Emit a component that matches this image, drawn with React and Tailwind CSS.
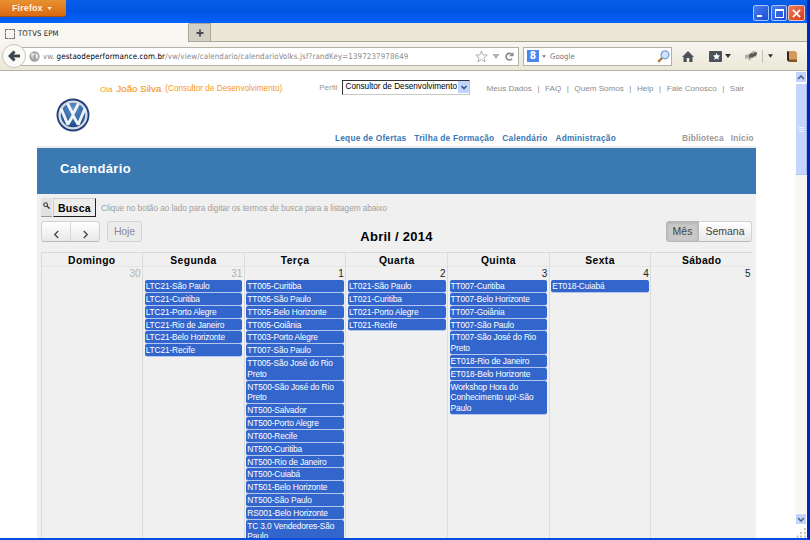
import React from 'react';

const week = [
  { name: 'Domingo', day: '30', muted: true, events: [] },
  {
    name: 'Segunda', day: '31', muted: true,
    events: ['LTC21-São Paulo', 'LTC21-Curitiba', 'LTC21-Porto Alegre', 'LTC21-Rio de Janeiro', 'LTC21-Belo Horizonte', 'LTC21-Recife'],
  },
  {
    name: 'Terça', day: '1',
    events: [
      'TT005-Curitiba', 'TT005-São Paulo', 'TT005-Belo Horizonte', 'TT005-Goiânia', 'TT003-Porto Alegre', 'TT007-São Paulo',
      'TT005-São José do Rio Preto', 'NT500-São José do Rio Preto', 'NT500-Salvador', 'NT500-Porto Alegre', 'NT600-Recife',
      'NT500-Curitiba', 'NT500-Rio de Janeiro', 'NT500-Cuiabá', 'NT501-Belo Horizonte', 'NT500-São Paulo',
      'RS001-Belo Horizonte', 'TC 3.0 Vendedores-São Paulo',
    ],
  },
  { name: 'Quarta', day: '2', events: ['LT021-São Paulo', 'LT021-Curitiba', 'LT021-Porto Alegre', 'LT021-Recife'] },
  {
    name: 'Quinta', day: '3',
    events: [
      'TT007-Curitiba', 'TT007-Belo Horizonte', 'TT007-Goiânia', 'TT007-São Paulo', 'TT007-São José do Rio Preto',
      'ET018-Rio de Janeiro', 'ET018-Belo Horizonte', 'Workshop Hora do Conhecimento up!-São Paulo',
    ],
  },
  { name: 'Sexta', day: '4', events: ['ET018-Cuiabá'] },
  { name: 'Sábado', day: '5', events: [] },
];

function Caret({ className }) {
  return (
    <svg viewBox="0 0 6 4" className={className}>
      <path d="M0 0h6L3 4z" fill="currentColor" />
    </svg>
  );
}

function TitleBar() {
  return (
    <div className="flex h-[23px] shrink-0 items-start justify-between bg-linear-to-b from-[#0a5fe8] via-[#0054e3] to-[#0662fb] pr-[2px]">
      <div className="flex h-[17px] w-[66px] items-center rounded-br-[3px] border-b border-[#a8540c] bg-linear-to-b from-[#e8912f] to-[#d96a10] pt-[2px] pl-[12px] text-[9px] font-bold tracking-[0.1px] text-[#fff3e0]">
        Firefox
        <Caret className="mb-[2px] ml-[4px] h-[3px] w-[5px]" />
      </div>
      <div className="flex gap-[1px] pt-[5px]">
        <div className="flex h-[16px] w-[16px] items-end rounded-[2px] border border-[#a9c4fa] bg-linear-to-br from-[#4a7df0] to-[#1a4bd0] pb-[3px] pl-[3px]">
          <div className="h-[2px] w-[5px] bg-white" />
        </div>
        <div className="ml-px flex h-[16px] w-[16px] items-center justify-center rounded-[2px] border border-[#a9c4fa] bg-linear-to-br from-[#4a7df0] to-[#1a4bd0]">
          <div className="h-[9px] w-[9px] border border-t-2 border-white" />
        </div>
        <div className="flex h-[16px] w-[17px] items-center justify-center rounded-[2px] border border-[#f3c0b0] bg-linear-to-br from-[#ee7a5c] to-[#d33a14]">
          <svg viewBox="0 0 10 10" className="h-[9px] w-[9px]">
            <path d="M1 1l8 8M9 1l-8 8" stroke="#fff" strokeWidth="1.8" />
          </svg>
        </div>
      </div>
    </div>
  );
}

function TabStrip() {
  return (
    <div className="flex h-[19px] shrink-0 border-b border-[#a9a799] bg-[#ebe8d8]">
      <div className="flex h-[19px] w-[189px] items-center rounded-tr-[2px] border-t border-r border-[#a9a799] border-t-[#fafaf6] bg-[#f7f6f1] pt-[2px] pl-[5px] text-[7.7px] text-[#222]">
        <div className="mr-[3px] h-[10px] w-[10px] border border-dashed border-[#777]" />
        <span className="tracking-[0.1px]">TOTVS EPM</span>
      </div>
      <div className="flex h-[18px] w-[22px] items-center justify-center border-t border-r border-[#a9a799] bg-[#d3d1c6]">
        <svg viewBox="0 0 8 8" className="h-[8px] w-[8px]">
          <path d="M4 0.5v7M0.5 4h7" stroke="#454b52" strokeWidth="1.8" />
        </svg>
      </div>
    </div>
  );
}

function NavBar() {
  return (
    <div className="flex h-[29px] shrink-0 items-center border-b border-[#b5b3a6] bg-linear-to-b from-[#f7f6f0] to-[#ebe8d7]">
      <div className="z-10 ml-[2px] flex h-[24px] w-[24px] items-center justify-center rounded-full border border-[#c6c4ba] bg-[#fbfaf7]">
        <svg viewBox="0 0 12 12" className="h-[12px] w-[12px]">
          <path d="M6.500 1.500L2 6l4.500 4.500M2.500 6H12" fill="none" stroke="#3d4650" strokeWidth="3" />
        </svg>
      </div>
      <div className="-ml-[5px] flex h-[19px] w-[498px] items-center border border-[#b4b2a8] bg-white pt-[1px] pl-[7px] text-[7.900px] whitespace-nowrap text-[#8a8a8a]">
        <svg viewBox="0 0 12 12" className="mr-[3px] h-[11px] w-[11px]">
          <circle cx="6" cy="6" r="5.600" fill="#a4a4a4" />
          <path d="M2 3l3-1 1 2-2 2 1 3-2-2zM7 2l3 2v3L8 9 7 6z" fill="#e3e3e3" />
        </svg>
        <span>vw.</span>
        <span className="ml-[2px] tracking-[0.120px] text-black">gestaodeperformance.com.br</span>
        <span className="tracking-[0.110px]">/vw/view/calendario/calendarioVolks.jsf?randKey=1397237978649</span>
        <span className="ml-auto flex items-center pr-[4px]">
          <svg viewBox="0 0 14 14" className="h-[13px] w-[13px]">
            <path d="M7 1l1.700 4.200 4.500.3-3.500 2.900 1.200 4.400L7 10.300l-3.900 2.500 1.200-4.400L.8 5.500l4.500-.3z" fill="#fff" stroke="#aaa" />
          </svg>
          <Caret className="ml-[4px] h-[5px] w-[8px] text-[#b4b4b4]" />
          <svg viewBox="0 0 10 10" className="ml-[5px] h-[9px] w-[9px]">
            <path d="M7.800 7.500A3.700 3.700 0 1 1 7.500 2.500" fill="none" stroke="#858a90" strokeWidth="1.800" />
            <path d="M9.500 0v4.800H4.800z" fill="#858a90" />
          </svg>
        </span>
      </div>
      <div className="ml-[4px] flex h-[19px] w-[149px] items-center border border-[#b4b2a8] bg-white pl-[3px] text-[7.700px] text-[#777]">
        <div className="flex h-[12px] w-[12px] items-center justify-center bg-[#4a86ee] text-[10px] leading-none font-bold text-white">8</div>
        <Caret className="mr-[4px] ml-[3px] h-[3px] w-[4px] text-[#777]" />
        <span className="pt-[2px] tracking-[0.050px]">Google</span>
        <svg viewBox="0 0 13 13" className="mr-[1px] ml-auto h-[13px] w-[13px]">
          <path d="M5.500 7.500L1.200 11.800" stroke="#b0792f" strokeWidth="2.400" />
          <circle cx="8" cy="4.800" r="3.900" fill="#cfe3fa" stroke="#7ba3d8" strokeWidth="1.400" />
        </svg>
      </div>
      <svg viewBox="0 0 12 11" className="ml-[10px] h-[11px] w-[12px]">
        <path d="M6 0l6 6h-1.500v5H7.300V7H4.700v4H1.500V6H0z" fill="#4b525a" />
      </svg>
      <svg viewBox="0 0 13 11" className="ml-[15px] h-[11px] w-[13px]">
        <rect width="13" height="11" rx="1" fill="#4b525a" />
        <path d="M7.500 2l1.100 2.300 2.500.3-1.800 1.700.5 2.500-2.300-1.200-2.200 1.200.4-2.500L4 4.600l2.400-.3z" fill="#fff" />
      </svg>
      <Caret className="ml-[3px] h-[4px] w-[6px] text-[#333]" />
      <svg viewBox="0 0 13 10" className="ml-[14px] h-[10px] w-[13px]">
        <path d="M0 4l4-1 4-3 4 1-1 5-4 1-3 3-1-3-3 1z" fill="#b0b0a8" />
        <path d="M4 4l3-2 1 1 2-2 2 1-1 3-2 0-2 2-1-1-2 1z" fill="#5a5a56" />
      </svg>
      <div className="ml-[4px] h-[13px] w-px bg-[#c2c0b4]" />
      <Caret className="ml-[5px] h-[4px] w-[5px] text-[#333]" />
      <svg viewBox="0 0 10 11" className="ml-[14px] h-[11px] w-[10px]">
        <path d="M0 0h8l2 2v9H2L0 9z" fill="#d09a60" />
        <path d="M0 0l2 1v10L0 9z" fill="#3c2414" />
        <path d="M2 8.500h8V11H2z" fill="#8a5225" />
      </svg>
    </div>
  );
}

function Logo() {
  return (
    <svg viewBox="0 0 34 34" className="h-[34px] w-[34px]">
      <defs>
        <radialGradient id="badge" cx="50%" cy="25%" r="80%">
          <stop offset="0" stopColor="#5f93cc" />
          <stop offset=".6" stopColor="#2f64a6" />
          <stop offset="1" stopColor="#173a78" />
        </radialGradient>
      </defs>
      <circle cx="17" cy="17" r="16.500" fill="#24407c" />
      <circle cx="17" cy="17" r="13.400" fill="url(#badge)" stroke="#d5dbe3" strokeWidth="2.400" />
      <path d="M11.500 5.500L17 16.200l5.500-10.700M5 10.500L11.800 26.500 17 17.500l5.200 9L29 10.500" fill="none" stroke="#f1f3f6" strokeWidth="2.900" strokeLinejoin="bevel" />
    </svg>
  );
}

function Header() {
  return (
    <header className="flex h-[75px] shrink-0 pl-[19px] text-[8px] whitespace-nowrap text-[#8c8c8c]">
      <div className="w-[44px] pt-[27px]">
        <Logo />
      </div>
      <div className="flex flex-1 flex-col">
        <div className="flex h-[37px] items-center text-[#f7981d]">
          <span>Olá</span>
          <span className="ml-[4px] text-[9.500px] tracking-[0.100px] [-webkit-text-stroke:0.15px]">João Silva</span>
          <span className="ml-[4px] text-[8.200px]">(Consultor de Desenvolvimento)</span>
          <span className="ml-[37px] pb-[4px] text-[#999]">Perfil</span>
          <div className="mb-[5px] ml-[5px] flex h-[15px] w-[128px] items-center border border-t-[#333] border-r-[#c8c8c8] border-b-[#c8c8c8] border-l-[#333] bg-white pl-[2px] text-[8.200px] text-black">
            <span>Consultor de Desenvolvimento</span>
            <div className="ml-auto flex h-[12px] w-[11px] items-center justify-center bg-[#c2d3fc]">
              <svg viewBox="0 0 6 5" className="h-[5px] w-[6px]">
                <path d="M.5 1L3 3.500 5.500 1" fill="none" stroke="#3d5a8c" strokeWidth="1.600" />
              </svg>
            </div>
          </div>
          <nav className="ml-[16px] flex gap-[5.500px] text-[8.100px] text-[#8c8c8c]">
            <span>Meus Dados</span><span>|</span><span>FAQ</span><span>|</span><span>Quem Somos</span><span>|</span>
            <span>Help</span><span>|</span><span>Fale Conosco</span><span>|</span><span>Sair</span>
          </nav>
        </div>
        <nav className="mt-[24px] flex gap-[8px] pl-[235px] text-[8.300px] font-bold tracking-[0.220px] text-[#3a78b3]">
          <span>Leque de Ofertas</span>
          <span>Trilha de Formação</span>
          <span>Calendário</span>
          <span>Administração</span>
          <span className="ml-[58px] text-[#999]">Biblioteca</span>
          <span className="-ml-[1px] text-[#999]">Início</span>
        </nav>
      </div>
    </header>
  );
}

function Toolbar() {
  return (
    <div className="flex h-[21px] items-center justify-between px-[4px]">
      <div className="flex w-[240px] items-center">
        <div className="flex h-[21px] w-[59px] rounded-[3px] border border-[#d2d2d2] border-b-[#bbb] bg-linear-to-b from-white to-[#e8e8e8]">
          {['M6 1L2 5l4 4', 'M2 1l4 4-4 4'].map((d) => (
            <div key={d} className="flex flex-1 items-center justify-center border-l border-[#d8d8d8] pt-[6px] first:border-l-0">
              <svg viewBox="0 0 8 10" className="h-[9px] w-[7px]">
                <path d={d} fill="none" stroke="#444" strokeWidth="1.500" />
              </svg>
            </div>
          ))}
        </div>
        <div className="ml-[7px] flex h-[21px] w-[35px] items-center justify-center rounded-[3px] border border-[#d2d2d2] bg-[#ececec] text-[10.500px] tracking-[-0.100px] text-[#8c8c8c]">
          Hoje
        </div>
      </div>
      <h2 className="pt-[11px] text-[13px] leading-[16px] font-bold tracking-[0.250px] text-black">Abril / 2014</h2>
      <div className="flex w-[240px] justify-end text-[10.500px] text-[#444]">
        <div className="flex h-[21px] w-[33px] items-center justify-center rounded-l-[3px] border border-[#b8b8b8] bg-[#c9c9c9] shadow-[inset_0_1px_3px_#aaa]">Mês</div>
        <div className="flex h-[21px] w-[53px] items-center justify-center rounded-r-[3px] border border-l-0 border-[#d2d2d2] border-b-[#bbb] bg-linear-to-b from-white to-[#e8e8e8]">Semana</div>
      </div>
    </div>
  );
}

function Calendar() {
  return (
    <div className="mr-[4px] ml-[3.500px] mt-[10px] grid min-h-0 flex-1 grid-cols-7 overflow-hidden border-t border-[#d9d9d9]">
      {week.map((col) => (
        <div key={col.name} className="min-w-0 border-l border-[#dcdcdc]">
          <div className="h-[14px] border-b border-[#e6e6e6] text-center text-[10.300px] leading-[15px] font-bold tracking-[0.400px] text-black">{col.name}</div>
          <div className={`h-[13px] pr-[1.500px] text-right text-[10px] leading-[13px] ${col.muted ? 'text-[#b4b4b4]' : 'text-[#222]'}`}>{col.day}</div>
          <div className="mr-[1.500px] ml-[1.500px] flex flex-col">
            {col.events.map((e) => (
              <div key={e} className="rounded-[2px] border-b border-[#b4c6ee] bg-[#3366cc] bg-clip-padding pt-[1px] pb-[0.150px] pl-[1px] text-[8.400px] leading-[10.700px] tracking-[-0.140px] text-white">
                {e}
              </div>
            ))}
          </div>
        </div>
      ))}
    </div>
  );
}

function ScrollBar() {
  return (
    <div className="flex w-[12px] flex-col bg-[#f8f6f0]">
      <div className="flex h-[12px] items-center justify-center rounded-[1px] border border-white bg-[#c3d4fc]">
        <svg viewBox="0 0 8 5" className="h-[5px] w-[8px]"><path d="M1 4l3-3 3 3" fill="none" stroke="#4d6185" strokeWidth="1.600" /></svg>
      </div>
      <div className="flex h-[92px] flex-col items-center justify-center gap-px rounded-[1px] border border-white border-r-[#9db7f2] border-b-[#b3c8f7] bg-[#c5d5fd]">
        {[0, 1, 2].map((i) => <div key={i} className="h-px w-[5px] bg-[#eef4fe]" />)}
      </div>
      <div className="mt-auto flex h-[12px] items-center justify-center rounded-[1px] border border-white bg-[#c3d4fc]">
        <svg viewBox="0 0 8 5" className="h-[5px] w-[8px]"><path d="M1 1l3 3 3-3" fill="none" stroke="#4d6185" strokeWidth="1.600" /></svg>
      </div>
      <svg viewBox="0 0 12 13" className="h-[13px] w-[12px] bg-white">
        <path d="M9 3h2v2H9zM9 7h2v2H9zM5 7h2v2H5zM9 10.500h2v2H9zM5 10.500h2v2H5zM1.500 10.500h2v2h-2z" fill="#c9c6b8" />
      </svg>
    </div>
  );
}

export default function App() {
  return (
    <div className="flex h-[540px] w-[810px] flex-col overflow-hidden border-r-[3px] border-b-2 border-r-[#0426bd] border-b-[#0a4be0] bg-white font-['Liberation_Sans',Arial,sans-serif]">
      <TitleBar />
      <div className="flex shrink-0 flex-col font-['DejaVu_Sans_Condensed','DejaVu_Sans',sans-serif]">
        <TabStrip />
        <NavBar />
      </div>
      <div className="flex min-h-0 flex-1">
        <main className="flex min-w-0 flex-1 flex-col pr-[39px] pl-[37px]">
          <Header />
          <div className="flex h-[48px] shrink-0 items-center border-t-2 border-[#ececec] bg-[#3b79b3] pb-[5px] pl-[23px] text-[13px] font-bold tracking-[0.400px] text-white">Calendário</div>
          <div className="flex min-h-0 flex-1 flex-col bg-[#f0f0f0] pt-[4px]">
            <div className="mb-[4px] flex h-[19px] shrink-0 items-center pl-[4px]">
              <div className="flex h-[19px] w-[11px] items-center justify-center border-b border-[#999] bg-[#e2e2e2] pb-[3px]">
                <svg viewBox="0 0 8 8" className="h-[7px] w-[7px]">
                  <circle cx="3" cy="3" r="2.100" fill="none" stroke="#333" strokeWidth="1.200" />
                  <path d="M4.500 4.500l3 3" stroke="#333" strokeWidth="1.500" />
                </svg>
              </div>
              <div className="ml-[1px] flex h-[19px] w-[43px] items-center justify-center border border-t-[#ccc] border-r-[#222] border-b-[#222] border-l-[#ccc] bg-[#ececec] pt-[2px] text-[10.500px] font-bold tracking-[0.300px] text-black">Busca</div>
              <span className="ml-[5px] pt-[1px] text-[8.300px] tracking-[-0.080px] whitespace-nowrap text-[#a0a0a0]">Clique no botão ao lado para digitar os termos de busca para a listagem abaixo</span>
            </div>
            <Toolbar />
            <Calendar />
          </div>
        </main>
        <ScrollBar />
      </div>
    </div>
  );
}
